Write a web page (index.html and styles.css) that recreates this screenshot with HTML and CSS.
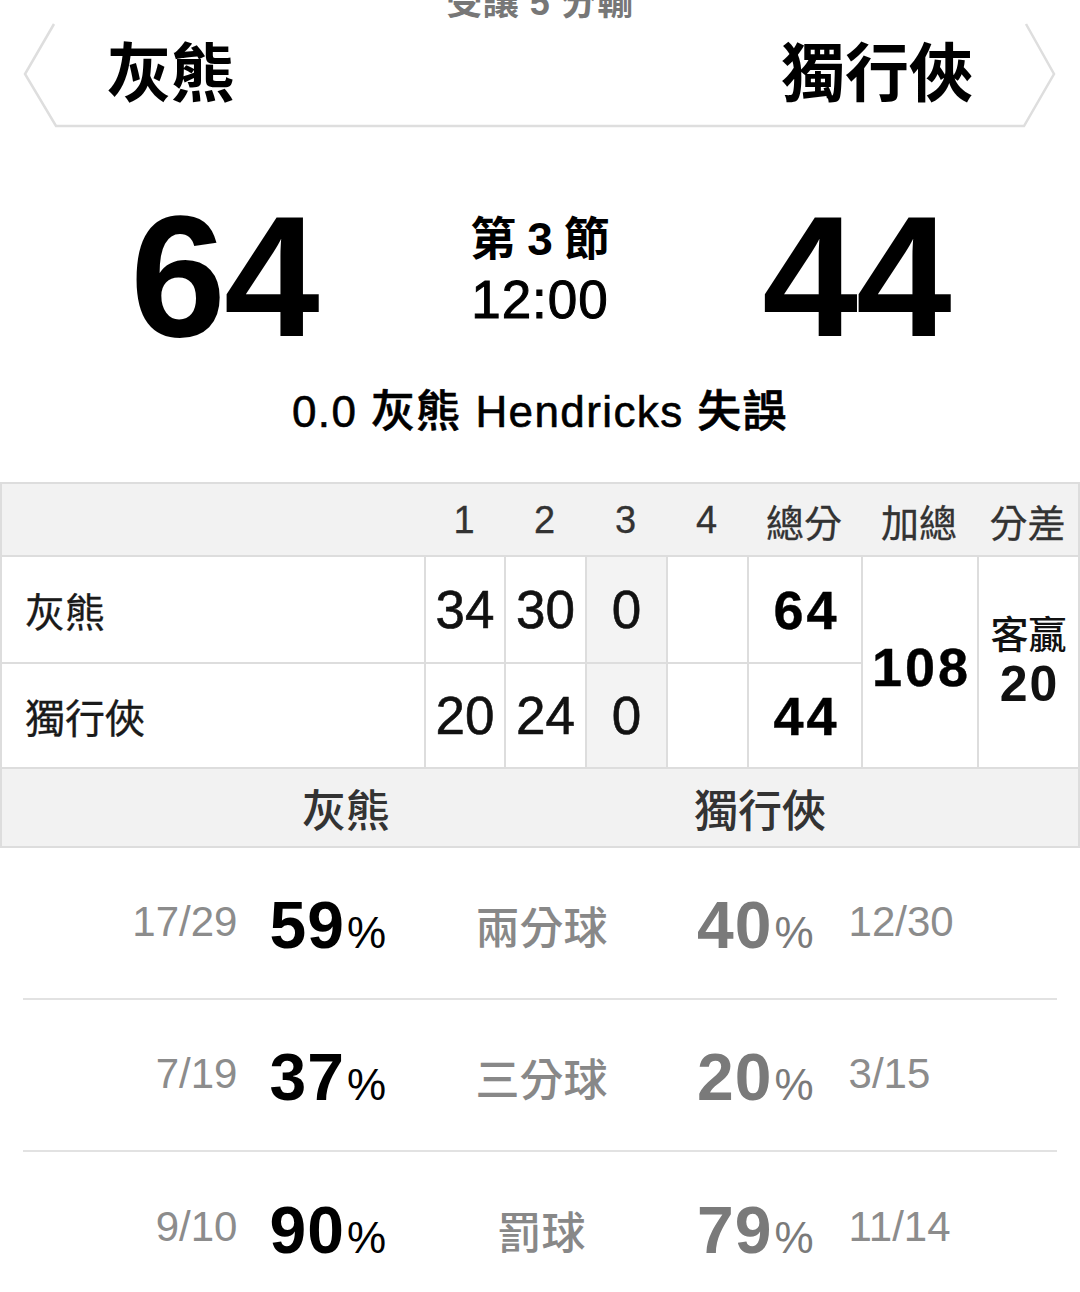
FILE: index.html
```html
<!DOCTYPE html>
<html lang="zh-Hant">
<head>
<meta charset="utf-8">
<title>灰熊 vs 獨行俠</title>
<link rel="stylesheet" href="styles.css">
</head>
<body>
<div class="page">
  <div class="handicap">受讓 5 分輸</div>

  <header class="teams">
    <svg class="banner" viewBox="0 0 1080 104" preserveAspectRatio="none" aria-hidden="true">
      <polyline points="54,2 25,52 56,104 1024,104 1054,52 1026,2" fill="none" stroke="#dedede" stroke-width="2.5" stroke-linejoin="miter"/>
    </svg>
    <span class="team-name">灰熊</span>
    <span class="team-name">獨行俠</span>
  </header>

  <section class="score">
    <div class="pts">64</div>
    <div class="period">
      <div class="quarter">第3節</div>
      <div class="clock">12:00</div>
    </div>
    <div class="pts">44</div>
  </section>

  <div class="play">0.0 灰熊 Hendricks 失誤</div>

  <div class="box">
    <div class="hd"></div>
    <div class="hd">1</div>
    <div class="hd">2</div>
    <div class="hd">3</div>
    <div class="hd">4</div>
    <div class="hd">總分</div>
    <div class="hd">加總</div>
    <div class="hd">分差</div>

    <div class="cell name r1">灰熊</div>
    <div class="cell num r1">34</div>
    <div class="cell num r1">30</div>
    <div class="cell num r1 cur">0</div>
    <div class="cell num r1"></div>
    <div class="cell num r1 bold">64</div>
    <div class="cell num span bold sum">108</div>
    <div class="cell span diff"><span class="diff-label">客贏</span><span class="diff-val">20</span></div>

    <div class="cell name r2">獨行俠</div>
    <div class="cell num r2">20</div>
    <div class="cell num r2">24</div>
    <div class="cell num r2 cur">0</div>
    <div class="cell num r2"></div>
    <div class="cell num r2 bold">44</div>
  </div>

  <div class="teambar">
    <span class="tb-left">灰熊</span>
    <span></span>
    <span class="tb-right">獨行俠</span>
  </div>

  <div class="stats">
    <div class="stat">
      <div class="side home"><span class="frac">17/29</span><span class="pct">59<small>%</small></span></div>
      <div class="label">兩分球</div>
      <div class="side away"><span class="pct">40<small>%</small></span><span class="frac">12/30</span></div>
    </div>
    <div class="stat">
      <div class="side home"><span class="frac">7/19</span><span class="pct">37<small>%</small></span></div>
      <div class="label">三分球</div>
      <div class="side away"><span class="pct">20<small>%</small></span><span class="frac">3/15</span></div>
    </div>
    <div class="stat last">
      <div class="side home"><span class="frac">9/10</span><span class="pct">90<small>%</small></span></div>
      <div class="label">罰球</div>
      <div class="side away"><span class="pct">79<small>%</small></span><span class="frac">11/14</span></div>
    </div>
  </div>
</div>
</body>
</html>
```

FILE: styles.css
```css
* { box-sizing: border-box; }

html, body {
  margin: 0;
  padding: 0;
  background: #fff;
  overflow: hidden;
}

body {
  font-family: "Liberation Sans", "Noto Sans CJK TC", sans-serif;
  color: #000;
}

.page {
  width: 1080px;
}

.handicap {
  margin-top: -16px;
  height: 36px;
  line-height: 38px;
  font-size: 36px;
  font-weight: 700;
  color: #777;
  text-align: center;
  letter-spacing: 0.5px;
}

.teams {
  position: relative;
  height: 104px;
  margin-top: 2px;
  display: flex;
  justify-content: space-between;
  align-items: center;
  padding: 0 107px;
}

.banner {
  position: absolute;
  left: 0;
  top: 0;
  width: 1080px;
  height: 104px;
  overflow: visible;
}

.team-name {
  position: relative;
  font-size: 64px;
  font-weight: 700;
  line-height: 1;
  color: #000;
}

.score {
  margin-top: 64px;
  display: grid;
  grid-template-columns: 448px 184px 448px;
  height: 172px;
}

.pts {
  font-size: 172px;
  line-height: 172px;
  font-weight: 700;
  text-align: center;
  letter-spacing: -2px;
}

.period {
  padding-top: 23px;
  display: flex;
  flex-direction: column;
  align-items: center;
  gap: 9px;
}

.quarter {
  font-size: 46px;
  line-height: 52px;
  font-weight: 700;
  white-space: nowrap;
  letter-spacing: 11px;
  margin-right: -11px;
}

.clock {
  font-size: 53px;
  line-height: 52px;
  font-weight: 400;
  letter-spacing: 1px;
  -webkit-text-stroke: 1px #000;
}

.play {
  margin-top: 25px;
  height: 50px;
  line-height: 50px;
  font-size: 44px;
  text-align: center;
  font-weight: 500;
  letter-spacing: 1.4px;
  -webkit-text-stroke: 0.6px #000;
}

.box {
  margin-top: 45px;
  display: grid;
  grid-template-columns: 422px 80px 81px 81px 81px 114px 116px 101px;
  grid-template-rows: 73px 107px 105px;
  border: 2px solid #dddddd;
  border-bottom: none;
}

.hd {
  background: #f2f2f2;
  border-bottom: 2px solid #dddddd;
  display: flex;
  align-items: center;
  justify-content: center;
  font-size: 38px;
  color: #333;
  padding-top: 2px;
  -webkit-text-stroke: 0.3px #333;
}

.cell {
  display: flex;
  align-items: center;
  justify-content: center;
  border-bottom: 2px solid #dddddd;
  border-left: 2px solid #dddddd;
  color: #111;
}

.cell.name {
  border-left: none;
  justify-content: flex-start;
  padding-left: 23px;
  font-size: 40px;
  color: #1a1a1a;
  -webkit-text-stroke: 0.3px #1a1a1a;
}

.cell.num {
  font-size: 53px;
  -webkit-text-stroke: 0.6px #111;
}

.cell.cur {
  background: #f3f3f3;
}

.cell.bold {
  font-weight: 700;
  font-size: 54px;
  letter-spacing: 3px;
  padding-left: 3px;
  color: #000;
  -webkit-text-stroke: 0.4px #000;
}

.cell.sum {
  grid-column: 7;
  grid-row: 2 / span 2;
  padding-top: 10px;
}

.cell.diff {
  grid-column: 8;
  grid-row: 2 / span 2;
  flex-direction: column;
  padding-top: 2px;
}

.diff-label {
  font-size: 38px;
  line-height: 42px;
  font-weight: 500;
}

.diff-val {
  font-size: 50px;
  line-height: 56px;
  font-weight: 700;
  letter-spacing: 2px;
  margin-right: -2px;
}

.teambar {
  height: 79px;
  background: #f2f2f2;
  border: 2px solid #dddddd;
  border-top: none;
  display: grid;
  grid-template-columns: 388px 304px 1fr;
  align-items: center;
  font-size: 44px;
  color: #333;
  font-weight: 500;
}

.tb-left { justify-self: end; }
.tb-right { justify-self: start; }

.stats {
  padding: 0 23px;
}

.stat {
  height: 152px;
  border-bottom: 2px solid #e2e2e2;
  display: grid;
  grid-template-columns: 363px 311px 1fr;
  align-items: center;
  padding-top: 4px;
}

.stat.last {
  border-bottom: none;
}

.side {
  display: flex;
  align-items: center;
  gap: 32px;
}

.side.home {
  justify-content: flex-end;
}

.side.away {
  justify-content: flex-start;
  gap: 35px;
}

.frac {
  font-size: 42px;
  color: #8c8c8c;
  padding-bottom: 6px;
}

.pct {
  font-size: 66px;
  font-weight: 700;
  line-height: 1;
  white-space: nowrap;
  letter-spacing: 1px;
}

.pct small {
  font-size: 44px;
  font-weight: 400;
  margin-left: 2px;
  letter-spacing: 0;
}

.home .pct { color: #000; }
.away .pct { color: #7a7a7a; }

.label {
  text-align: center;
  font-size: 44px;
  color: #888;
  font-weight: 500;
}
```
